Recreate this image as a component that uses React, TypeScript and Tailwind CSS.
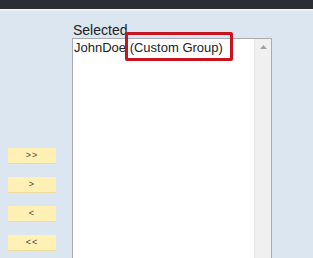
import React from "react";

export default function App() {
  const btns = [">>", ">", "<", "<<"];
  return (
    <div
      className="relative w-[313px] h-[258px] overflow-hidden bg-[#dce6f1]"
      style={{ fontFamily: '"Liberation Sans", Arial, sans-serif' }}
    >
      <div className="h-[9px] bg-[#2b2e34]" />
      <div className="h-[2px] bg-[#eef3f9]" />
      <div className="flex">
        <div className="w-[72px] shrink-0 pt-[137px] pl-[8px] flex flex-col gap-[13px]">
          {btns.map((b) => (
            <div
              key={b}
              className="w-[48px] h-[16px] bg-[#fff1b5] border-b border-[#efdc9a] flex items-center justify-center text-[9px] leading-none text-[#444] tracking-[1px]"
            >
              {b}
            </div>
          ))}
        </div>
        <div className="flex flex-col pt-[11px]">
          <div className="h-[16px] text-[14px] leading-[16px] text-[#222] pl-[1px]">Selected</div>
          <div className="w-[200px] h-[230px] border border-[#a9abb0] bg-white flex">
            <div className="flex-1 pl-[1px] pt-[1px] text-[13px] leading-[15px] text-[#222] whitespace-nowrap">
              JohnDoe (Custom Group)
            </div>
            <div className="w-[17px] bg-[#f0f0f0] border-l border-[#e6e6e6] flex justify-center pt-[6px]">
              <svg width="7" height="4" viewBox="0 0 7 4">
                <path d="M0 4 L3.5 0 L7 4 Z" fill="#a3a3a3" />
              </svg>
            </div>
          </div>
        </div>
      </div>
      <div className="absolute left-[125px] top-[32px] w-[108px] h-[29px] border-[3px] border-[#c8141e] rounded-[2px]" />
    </div>
  );
}
